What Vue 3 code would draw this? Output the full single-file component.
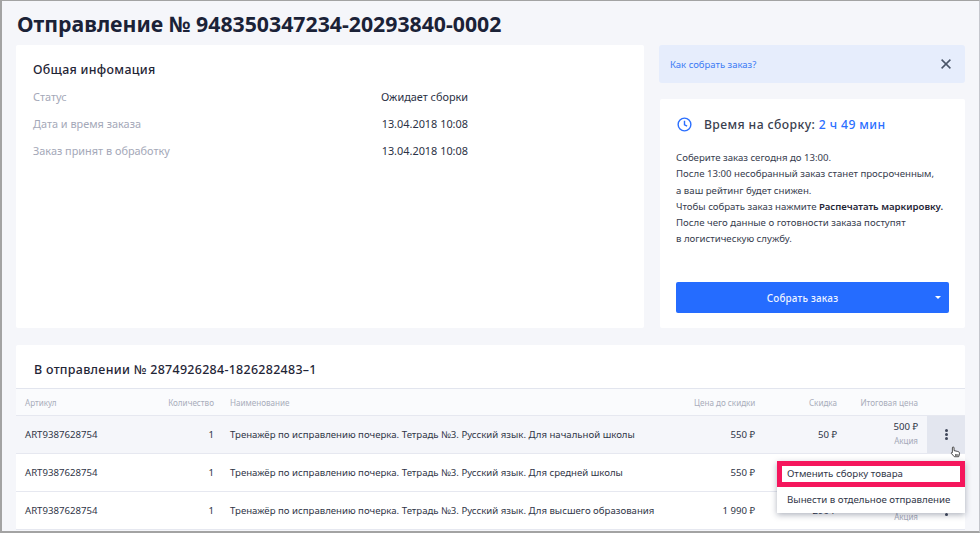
<script setup>
const info = [
  { label: 'Статус', value: 'Ожидает сборки' },
  { label: 'Дата и время заказа', value: '13.04.2018 10:08' },
  { label: 'Заказ принят в обработку', value: '13.04.2018 10:08' }
]
const rows = [
  { name: 'Тренажёр по исправлению почерка. Тетрадь №3. Русский язык. Для начальной школы', price: '550 ₽', disc: '50 ₽', total: '500 ₽', active: true },
  { name: 'Тренажёр по исправлению почерка. Тетрадь №3. Русский язык. Для средней школы', price: '550 ₽', disc: '50 ₽', total: '500 ₽' },
  { name: 'Тренажёр по исправлению почерка. Тетрадь №3. Русский язык. Для высшего образования', price: '1 990 ₽', disc: '290 ₽', total: '1 700 ₽' }
]
</script>

<template>
  <div class="frame">
    <h1 class="title">Отправление № 948350347234-20293840-0002</h1>
    <div class="top">
      <section class="card general">
        <h2 class="card-title">Общая инфомация</h2>
        <div v-for="item in info" :key="item.label" class="info-row">
          <span class="info-label">{{ item.label }}</span>
          <span class="info-value">{{ item.value }}</span>
        </div>
      </section>
      <div class="side">
        <div class="banner">
          <span class="banner-link">Как собрать заказ?</span>
          <svg class="close" width="10" height="10" viewBox="0 0 10 10"><path d="M.6.6l8.800 8.800M9.400.6L.6 9.400" stroke="#4a5568" stroke-width="1.500" fill="none"/></svg>
        </div>
        <section class="card assembly">
          <div class="time">
            <svg width="15" height="15" viewBox="0 0 16 16" fill="none" stroke="#2b6fff" stroke-width="1.500"><circle cx="8" cy="8" r="6.800"/><path d="M8 4v4.400l2.800 1.400"/></svg>
            <span class="time-label">Время на сборку: <span class="time-value">2 ч 49 мин</span></span>
          </div>
          <p class="desc">
            Соберите заказ сегодня до 13:00.<br>
            После 13:00 несобранный заказ станет просроченным,<br>
            а ваш рейтинг будет снижен.<br>
            Чтобы собрать заказ нажмите <b>Распечатать маркировку.</b><br>
            После чего данные о готовности заказа поступят<br>
            в логистическую службу.
          </p>
          <button class="collect">
            <span>Собрать заказ</span>
            <i class="caret"></i>
          </button>
        </section>
      </div>
    </div>
    <section class="card table-card">
      <h2 class="table-title">В отправлении № 2874926284-1826282483–1</h2>
      <div class="grid head">
        <span>Артикул</span>
        <span class="r">Количество</span>
        <span>Наименование</span>
        <span class="r">Цена до скидки</span>
        <span class="r">Скидка</span>
        <span class="r">Итоговая цена</span>
        <span></span>
      </div>
      <div v-for="(row, i) in rows" :key="i" class="grid row" :class="{ active: row.active }">
        <span>ART9387628754</span>
        <span class="r">1</span>
        <span>{{ row.name }}</span>
        <span class="r">{{ row.price }}</span>
        <span class="r">{{ row.disc }}</span>
        <span class="r total">
          <span>{{ row.total }}</span>
          <small>Акция</small>
        </span>
        <span class="more">
          <i></i><i></i><i></i>
        </span>
      </div>
      <div class="menu">
        <div class="menu-item hl">Отменить сборку товара</div>
        <div class="menu-item">Вынести в отдельное отправление</div>
      </div>
      <svg class="cursor" width="11" height="12" viewBox="0 0 13 15">
        <path d="M3.500 1.200c.8 0 1.200.5 1.200 1.200v3.400l4.600 1c1.300.3 2.200 1 2.200 2.200 0 1.600-.5 2.800-1 4.400H5l-3.600-4c-.6-.8.3-1.700 1.200-1.100V2.400c0-.7.2-1.200.9-1.200z" fill="#fff" stroke="#222" stroke-width="1"/>
        <path d="M6.500 10v2.500M8 10v2.500M9.500 10v2.500" stroke="#222" stroke-width=".8"/>
      </svg>
    </section>
  </div>
</template>

<style scoped>
.frame {
  box-sizing: border-box;
  width: 980px;
  height: 533px;
  overflow: hidden;
  background: #f5f6fa;
  border: 1px solid #a3a3a3;
  border-left-width: 2px;
  border-bottom-width: 2px;
  border-right-color: #c4c6cc;
  padding: 0 14px 0 14px;
  font-family: "Noto Sans", "Open Sans", sans-serif;
  color: #2b3145;
  font-size: 10px;
}
.title {
  margin: 0;
  height: 44px;
  line-height: 46px;
  padding-left: 1px;
  font-size: 21.250px;
  font-weight: 700;
  color: #1b2237;
  white-space: nowrap;
}
.top {
  display: flex;
  gap: 15px;
  height: 283px;
  margin-bottom: 17px;
}
.card {
  background: #fff;
  border-radius: 2px;
}
.general {
  width: 628px;
  box-sizing: border-box;
  padding: 16px 17px;
}
.card-title {
  margin: 0 0 4px;
  font-size: 12.400px;
  line-height: 18px;
  font-weight: 500;
  letter-spacing: .3px;
  color: #1f2536;
}
.info-row {
  display: flex;
  height: 27px;
  line-height: 27px;
  font-size: 10.900px;
}
.info-label {
  flex: 0 0 348px;
  color: #a4a8b8;
}
.info-value {
  width: 87px;
  text-align: right;
  white-space: nowrap;
  color: #2b3145;
}
.side {
  flex: 1;
  display: flex;
  flex-direction: column;
  gap: 16px;
}
.banner {
  height: 38px;
  display: flex;
  align-items: center;
  justify-content: space-between;
  padding: 0 14px 0 11px;
  background: #e6edfc;
  border-radius: 3px;
}
.banner-link {
  color: #3b7bf5;
  font-size: 9.500px;
}
.assembly {
  flex: 1;
  margin-left: 1px;
  box-sizing: border-box;
  padding: 16px 16px 15px;
  display: flex;
  flex-direction: column;
}
.time {
  display: flex;
  align-items: center;
  gap: 12px;
  height: 18px;
}
.time svg {
  margin-left: 1px;
}
.time-label {
  font-size: 12.200px;
  font-weight: 500;
  letter-spacing: .4px;
  color: #3a3f4f;
}
.time-value {
  color: #2b6fff;
}
.desc {
  margin: 17px 0 0;
  font-size: 9.630px;
  line-height: 16.300px;
  color: #363c4e;
  white-space: nowrap;
}
.desc b {
  font-weight: 600;
  color: #1f2536;
}
.collect {
  margin-top: auto;
  position: relative;
  height: 31px;
  border: none;
  border-radius: 2px;
  background: #256cff;
  color: #eef3ff;
  font-family: inherit;
  font-size: 9.900px;
  font-weight: 500;
  letter-spacing: .2px;
  padding: 0 20px 0 0;
}
.caret {
  position: absolute;
  right: 8px;
  top: 14px;
  border-left: 3.500px solid transparent;
  border-right: 3.500px solid transparent;
  border-top: 3.500px solid #fff;
}
.table-card {
  position: relative;
  height: 185px;
}
.table-title {
  margin: 0;
  height: 44px;
  line-height: 49px;
  padding-left: 18px;
  font-size: 12.450px;
  font-weight: 500;
  letter-spacing: .3px;
  color: #1f2536;
  border-bottom: 1px solid #e2e5ee;
  box-sizing: border-box;
}
.grid {
  display: grid;
  grid-template-columns: 121px 68px 480px 61px 82px 81px 47px;
  align-items: center;
  box-sizing: border-box;
  border-bottom: 1px solid #e6e8f0;
  padding-left: 9px;
  white-space: nowrap;
}
.head {
  height: 27px;
  font-size: 8.100px;
  color: #a9adbb;
  background: #fafbfd;
}
.row {
  height: 38px;
  font-size: 9.620px;
  color: #2f3547;
}
.grid > :nth-child(3) {
  padding-left: 16px;
}
.row.active {
  background: #f5f6fa;
}
.r {
  text-align: right;
}
.total {
  display: flex;
  flex-direction: column;
  align-items: flex-end;
  line-height: 14px;
  padding-bottom: 1px;
}
.total small {
  font-size: 8px;
  color: #a4a8b8;
}
.more {
  align-self: stretch;
  margin-left: 9px;
  display: flex;
  flex-direction: column;
  align-items: center;
  justify-content: center;
  gap: 1px;
  width: 38px;
}
.active .more {
  background: #e3e6ef;
}
.more i {
  width: 3px;
  height: 3px;
  border-radius: 50%;
  background: #3f4659;
}
.menu {
  position: absolute;
  right: 0;
  top: 116px;
  width: 188px;
  background: #fff;
  box-shadow: 0 2px 6px rgba(30, 40, 70, .35);
  font-size: 9.700px;
  color: #2f3547;
}
.menu-item {
  box-sizing: border-box;
  height: 26px;
  line-height: 25px;
  padding-left: 10px;
  white-space: nowrap;
}
.menu-item.hl {
  height: 26px;
  line-height: 15px;
  padding-left: 5px;
  border: 5px solid #f5165c;
}
.menu-item:last-child {
  height: 26px;
  line-height: 25px;
}
.cursor {
  position: absolute;
  left: 934px;
  top: 101px;
}
</style>
